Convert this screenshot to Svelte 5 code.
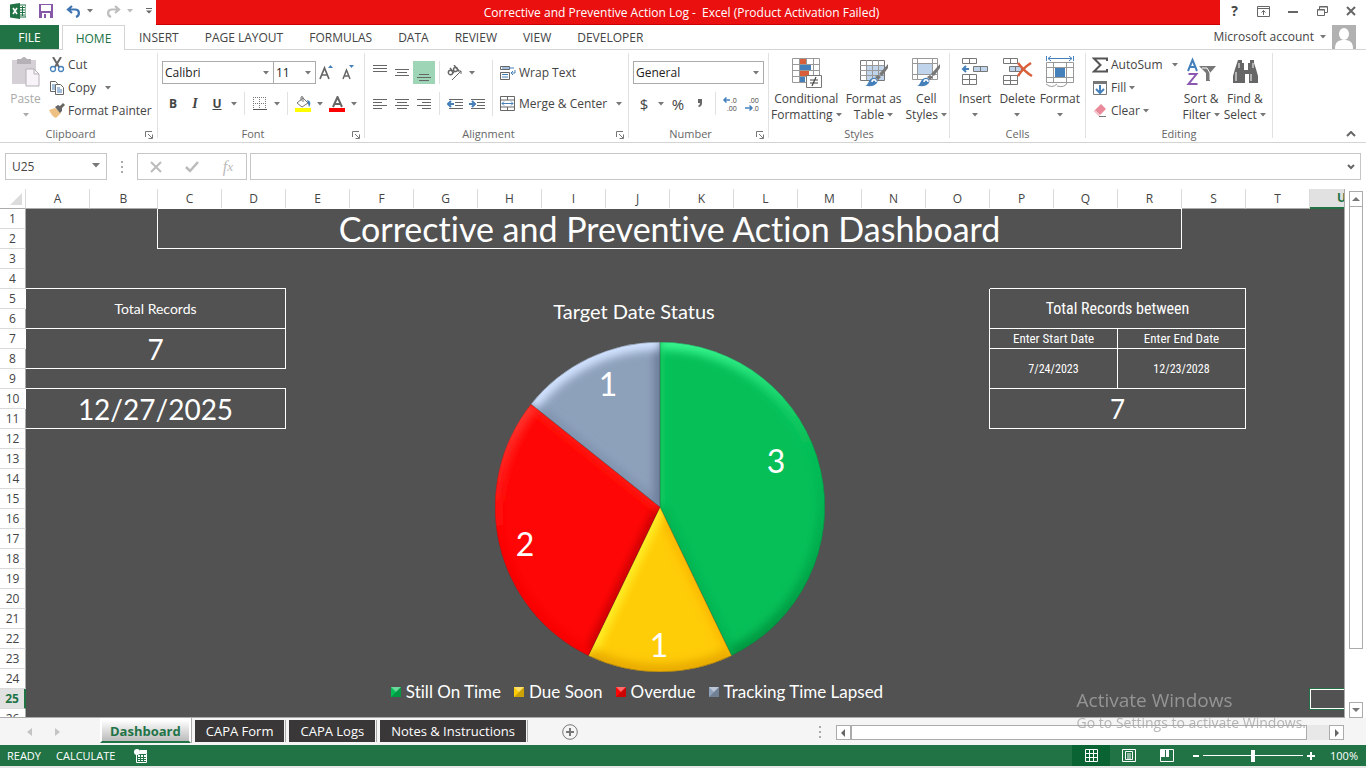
<script lang="ts">
	type Cell = { row: number; col: number; rows: number; cols: number; text: string; kind: string };

	const menu = ["INSERT", "PAGE LAYOUT", "FORMULAS", "DATA", "REVIEW", "VIEW", "DEVELOPER"];
	const columns = "ABCDEFGHIJKLMNOPQRSTU".split("");
	const rows = Array.from({ length: 26 }, (_, i) => i + 1);
	const sheets = ["CAPA Form", "CAPA Logs", "Notes & Instructions"];

	const cells: Cell[] = [
		{ row: 1, col: 2, rows: 2, cols: 16, text: "Corrective and Preventive Action Dashboard", kind: "title" },
		{ row: 5, col: 0, rows: 2, cols: 4, text: "Total Records", kind: "label" },
		{ row: 7, col: 0, rows: 2, cols: 4, text: "7", kind: "big" },
		{ row: 10, col: 0, rows: 2, cols: 4, text: "12/27/2025", kind: "big" },
		{ row: 5, col: 15, rows: 2, cols: 4, text: "Total Records between", kind: "narrow heading" },
		{ row: 7, col: 15, rows: 1, cols: 2, text: "Enter Start Date", kind: "narrow" },
		{ row: 7, col: 17, rows: 1, cols: 2, text: "Enter End Date", kind: "narrow" },
		{ row: 8, col: 15, rows: 2, cols: 2, text: "7/24/2023", kind: "narrow date" },
		{ row: 8, col: 17, rows: 2, cols: 2, text: "12/23/2028", kind: "narrow date" },
		{ row: 10, col: 15, rows: 2, cols: 4, text: "7", kind: "big total" }
	];

	function cellAt(row: number, col: number) {
		return cells.find((c) => row >= c.row && row < c.row + c.rows && col >= c.col && col < c.col + c.cols);
	}

	// Pie geometry
	const R = 165;
	const data = [
		{ name: "Still On Time", value: 3, color: "#06bf57", start: "#0bca5f", end: "#05b553", arc: "url(#greenArc)", lx: 116, ly: -34 },
		{ name: "Due Soon", value: 1, color: "#ffcc08", start: "#fbb800", end: "#fff028", arc: "#e9ab00", lx: -1, ly: 150 },
		{ name: "Overdue", value: 2, color: "#ff0606", start: "#c80000", end: "#ff1610", arc: "url(#redArc)", lx: -135, ly: 49 },
		{ name: "Tracking Time Lapsed", value: 1, color: "#8ea1bb", start: "#7f92af", end: "#6b7c99", arc: "#d0e2ff", lx: -52, ly: -111 }
	];
	const total = data.reduce((sum, d) => sum + d.value, 0);

	let turned = 0;
	const slices = data.map((d) => {
		const a = (turned / total) * Math.PI * 2;
		turned += d.value;
		const b = (turned / total) * Math.PI * 2;
		const p = `${R * Math.sin(a)} ${-R * Math.cos(a)}`;
		const q = `${R * Math.sin(b)} ${-R * Math.cos(b)}`;
		return {
			...d,
			shape: `M0 0L${p}A${R} ${R} 0 0 1 ${q}Z`,
			startLine: `M0 0L${p}`,
			endLine: `M0 0L${q}`,
			rim: `M${p}A${R} ${R} 0 0 1 ${q}`
		};
	});

	let zoom = $state(50);
</script>

{#snippet caret()}
	<svg class="caret" width="6" height="4" viewBox="0 0 6 4"><path d="M0 0h6L3 3.5z" fill="currentColor" /></svg>
{/snippet}

{#snippet launcher()}
	<button class="launcher" aria-label="More options">
		<svg width="8" height="8" viewBox="0 0 8 8" fill="none" stroke="#777"><path d="M.5 6V.5H7M3 3l4 4M7.500 3.500v4h-4" /></svg>
	</button>
{/snippet}

{#snippet lines(widths: number[], top: number, right = false, center = false)}
	<svg width="16" height="16" viewBox="0 0 16 16" fill="#666">
		{#each widths as w, i}
			<rect x={right ? 15 - w : center ? 8 - w / 2 : 1} y={top + i * 3} width={w} height="1" />
		{/each}
	</svg>
{/snippet}

{#snippet brush()}
	<path d="M30 8l-9 10 3 2 6-8z" fill="#777" />
	<path d="M20 19l-3 2 3 3 3-3z" fill="#777" />
	<path d="M7 30c4-1 3-7 8-8 4-1 6 4 3 6-3 3-7 2-11 2z" fill="#4580bb" />
	<path d="M14 26c0-3 4-3 4 0" fill="none" stroke="#fff" stroke-width="1.500" />
{/snippet}

<div class="excel">
	<header class="titlebar">
		<div class="quick">
			<svg width="16" height="16" viewBox="0 0 16 16">
				<path d="M9 2h7v12H9z" fill="#fff" stroke="#217346" />
				<path d="M10 4.500h5M10 7h5M10 9.500h5M10 12h5M12.500 3v10" stroke="#217346" />
				<path d="M0 1.500L10 0v16L0 14.500z" fill="#217346" />
				<path d="M3 5l4 6M7 5l-4 6" stroke="#fff" stroke-width="1.600" />
			</svg>
			<button aria-label="Save">
				<svg width="14" height="14" viewBox="0 0 14 14"><path d="M0 0h14v14H0z" fill="#8559a8" /><path d="M2 1h10v6H2zM3 9h8v5H3z" fill="#fff" /><path d="M5 10h2v4H5z" fill="#8559a8" /></svg>
			</button>
			<button aria-label="Undo">
				<svg width="15" height="13" viewBox="0 0 15 13" fill="none" stroke="#3f74b0" stroke-width="2.200"><path d="M6 1L2 4.500 6 8M2 4.500h7c5 0 5 6 1 7.500" /></svg>
				{@render caret()}
			</button>
			<button class="redo" aria-label="Redo">
				<svg width="15" height="13" viewBox="0 0 15 13" fill="none" stroke="#bdbdbd" stroke-width="2.200"><path d="M9 1l4 3.500L9 8M13 4.500H6c-5 0-5 6-1 7.500" /></svg>
				{@render caret()}
			</button>
			<button aria-label="Customize toolbar">
				<svg width="6" height="6" viewBox="0 0 6 6" fill="#666"><path d="M0 0h6v1H0zM0 2.500h6L3 5.500z" /></svg>
			</button>
		</div>
		<h1>Corrective and Preventive Action Log -&nbsp; Excel (Product Activation Failed)</h1>
		<div class="window">
			<button class="help" aria-label="Help">?</button>
			<button aria-label="Ribbon display options">
				<svg width="13" height="11" viewBox="0 0 13 11" fill="none" stroke="#666"><path d="M.5.5h12v10H.5zM0 2.500h13M6.500 9V4.500M4.500 6.500l2-2 2 2" /></svg>
			</button>
			<button aria-label="Minimize"><svg width="10" height="10" viewBox="0 0 10 10"><path d="M0 5h10v2H0z" fill="#666" /></svg></button>
			<button aria-label="Restore">
				<svg width="11" height="10" viewBox="0 0 11 10" fill="none" stroke="#666"><path d="M.5 3.500h7v6h-7zM.5 4h7M2.500 3V.5h8v6H8M2.500 1h8" /></svg>
			</button>
			<button aria-label="Close"><svg width="10" height="10" viewBox="0 0 10 10"><path d="M1 1l8 8M9 1L1 9" stroke="#666" stroke-width="2" /></svg></button>
		</div>
	</header>

	<nav class="menu">
		<button class="file">FILE</button>
		<button class="home">HOME</button>
		{#each menu as item}
			<button>{item}</button>
		{/each}
		<button class="account">Microsoft account {@render caret()}</button>
		<svg width="24" height="24" viewBox="0 0 24 24"><path d="M0 0h24v24H0z" fill="#b1b1b1" /><ellipse cx="12" cy="9" rx="5" ry="6" fill="#fff" /><path d="M3 24c0-7 3-9 9-9s9 2 9 9z" fill="#fff" /></svg>
	</nav>

	<div class="ribbon">
		<section class="group clipboard">
			<div class="body">
				<button class="large muted">
					<svg width="30" height="32" viewBox="0 0 30 32">
						<path d="M1 4h24v24H1z" fill="#d4d0d6" /><path d="M6 3h4q3-4 6 0h4v5H6z" fill="#b5b1b7" />
						<path d="M15 13h8l5 5v12H15z" fill="#f7f3f9" stroke="#b5b1b7" /><path d="M23 13v5h5" fill="none" stroke="#b5b1b7" />
					</svg>
					<span>Paste</span>
					{@render caret()}
				</button>
				<div class="stack">
					<button>
						<svg width="16" height="16" viewBox="0 0 16 16" fill="none"><path d="M4 0l6 10M12 0L6 10" stroke="#666" stroke-width="2" /><circle cx="4" cy="12" r="2.500" stroke="#4580bb" stroke-width="1.300" /><circle cx="12" cy="12" r="2.500" stroke="#4580bb" stroke-width="1.300" /></svg>
						Cut
					</button>
					<button>
						<svg width="16" height="16" viewBox="0 0 16 16" fill="#fff" stroke="#666"><path d="M1.500 1.500h5l2 2v8h-7z" /><path d="M6.500 4.500h5l3 3v7h-8z" /><path d="M3 5h3M3 7h3M3 9h3M8 8h3M8 10h5M8 12h5" stroke="#4580bb" /></svg>
						Copy <i></i>{@render caret()}
					</button>
					<button>
						<svg width="16" height="16" viewBox="0 0 16 16"><path d="M0 7l6-2 6 5-5 5c-3-1-5-4-7-8z" fill="#eec183" /><path d="M6 4l3-2 2 1 3-3 2 2-3 3v3l-2 2z" fill="#666" /></svg>
						Format Painter
					</button>
				</div>
			</div>
			<footer>Clipboard{@render launcher()}</footer>
		</section>

		<section class="group font">
			<div class="body rows">
				<div class="row">
					<label class="select family"><select aria-label="Font"><option>Calibri</option></select>{@render caret()}</label>
					<label class="select size"><select aria-label="Font size"><option>11</option></select>{@render caret()}</label>
					<button class="tool" aria-label="Increase font size"><svg width="16" height="16" viewBox="0 0 16 16"><path d="M1 14L5.500 3 10 14M3 10h5" fill="none" stroke="#666" stroke-width="1.700" /><path d="M9 3l2.500-3L14 3z" fill="#4580bb" /></svg></button>
					<button class="tool" aria-label="Decrease font size"><svg width="16" height="16" viewBox="0 0 16 16"><path d="M2 14L5.500 5 9 14M3 11h5" fill="none" stroke="#666" stroke-width="1.500" /><path d="M8 0l2.500 3L13 0z" fill="#4580bb" /></svg></button>
				</div>
				<div class="row">
					<button class="tool"><b>B</b></button>
					<button class="tool"><b class="italic">I</b></button>
					<button class="tool"><b class="under">U</b></button>
					<button class="drop" aria-label="Underline style">{@render caret()}</button>
					<span class="bar"></span>
					<button class="tool" aria-label="Borders"><svg width="14" height="14" viewBox="0 0 14 14" fill="none" stroke="#777" stroke-dasharray="1 1"><path d="M.5 0v13M6.500 0v13M12.500 0v13M0 .5h13M0 6.500h13" /><path d="M0 12.500h14" stroke-dasharray="none" stroke="#555" /></svg></button>
					<button class="drop" aria-label="Border style">{@render caret()}</button>
					<span class="bar"></span>
					<button class="tool" aria-label="Fill colour"><svg width="16" height="16" viewBox="0 0 16 16"><path d="M2 7l6-5 5 5-6 4z" fill="#fff" stroke="#777" /><path d="M6 5V1q1-1 2 0v5" fill="none" stroke="#777" /><path d="M12 4c4 1 4 4 2 7z" fill="#4580bb" /><path d="M0 12h16v4H0z" fill="#ff0" /></svg></button>
					<button class="drop" aria-label="Fill palette">{@render caret()}</button>
					<button class="tool" aria-label="Font colour"><svg width="16" height="16" viewBox="0 0 16 16"><path d="M4 11L8.500 1 13 11M5.500 8h6" fill="none" stroke="#666" stroke-width="2" /><path d="M0 12h16v4H0z" fill="red" /></svg></button>
					<button class="drop" aria-label="Font palette">{@render caret()}</button>
				</div>
			</div>
			<footer>Font{@render launcher()}</footer>
		</section>

		<section class="group alignment">
			<div class="body">
				<div class="rows">
					<div class="row">
						<button class="tool" aria-label="Top align">{@render lines([14, 14, 14], 0)}</button>
						<button class="tool" aria-label="Middle align">{@render lines([14, 10, 14], 4, false, true)}</button>
						<button class="tool pressed" aria-label="Bottom align">{@render lines([10, 14, 10], 9, false, true)}</button>
						<span class="bar"></span>
						<button class="tool" aria-label="Orientation"><svg width="16" height="16" viewBox="0 0 16 16" fill="none" stroke="#666" stroke-width="1.400"><circle cx="3.500" cy="7.500" r="2.200" /><path d="M3 3l4 5M7 0l5 6" /><circle cx="8.500" cy="4.500" r="2" /><path d="M5 15L14 6M11 6h3v3" stroke-width="1" /></svg></button>
						<button class="drop" aria-label="Orientation options">{@render caret()}</button>
					</div>
					<div class="row">
						<button class="tool" aria-label="Align left">{@render lines([14, 9, 14, 9], 3)}</button>
						<button class="tool" aria-label="Center">{@render lines([14, 10, 14, 10], 3, false, true)}</button>
						<button class="tool" aria-label="Align right">{@render lines([14, 9, 14, 9], 3, true)}</button>
						<span class="bar"></span>
						{#each ["Decrease indent", "Increase indent"] as name, i}
							<button class="tool" aria-label={name}>
								<svg width="16" height="14" viewBox="0 0 16 14"><path d="M2 2h14v1H2zM8 5h8v1H8zM8 8h8v1H8zM2 11h14v1H2z" fill="#666" /><path d={i ? "M0 7h6M3 4l3 3-3 3" : "M7 7H1M4 4L1 7l3 3"} fill="none" stroke="#4580bb" stroke-width="2" /></svg>
							</button>
						{/each}
					</div>
				</div>
				<span class="bar tall"></span>
				<div class="rows">
					<button class="wide">
						<svg width="16" height="16" viewBox="0 0 16 16" fill="none" stroke="#666"><path d="M.5 1.500h9v3h-9zM.5 7.500h9v7h-9z" /><path d="M2 3h12M2 9.500h6M2 12h6M15 5v3h-4M13 6l-2 2 2 2" stroke="#4580bb" /></svg>
						Wrap Text
					</button>
					<button class="wide">
						<svg width="16" height="16" viewBox="0 0 16 16" fill="none" stroke="#666"><path d="M.5.5h14v14H.5zM.5 4h14M.5 11h14M7.500.5V4M7.500 11v4" /><path d="M2 7.500h11M4 5.500l-2 2 2 2M11 5.500l2 2-2 2" stroke="#4580bb" /></svg>
						Merge &amp; Center {@render caret()}
					</button>
				</div>
			</div>
			<footer>Alignment{@render launcher()}</footer>
		</section>

		<section class="group number">
			<div class="body rows">
				<div class="row"><label class="select format"><select aria-label="Number format"><option>General</option></select>{@render caret()}</label></div>
				<div class="row">
					<button class="tool sign">$</button>
					<button class="drop" aria-label="Currency">{@render caret()}</button>
					<button class="tool sign">%</button>
					<button class="tool" aria-label="Comma style"><svg width="6" height="9" viewBox="0 0 6 9"><path d="M1 0h4v4q0 3-3 4l-1-1q2-1 2-3H1z" fill="#666" /></svg></button>
					<span class="bar"></span>
					<button class="tool decimals" aria-label="Increase decimal"><svg width="18" height="18" viewBox="0 0 18 18"><path d="M8 5H2M4.500 2.500L2 5l2.500 2.500" fill="none" stroke="#4580bb" stroke-width="1.500" /><text x="9" y="8">.0</text><text x="5" y="16">.00</text></svg></button>
					<button class="tool decimals" aria-label="Decrease decimal"><svg width="18" height="18" viewBox="0 0 18 18"><path d="M1 13h7M5.500 10.500L8 13l-2.500 2.500" fill="none" stroke="#4580bb" stroke-width="1.500" /><text x="5" y="8">.00</text><text x="9" y="16">.0</text></svg></button>
				</div>
			</div>
			<footer>Number{@render launcher()}</footer>
		</section>

		<section class="group styles">
			<div class="body">
				<button class="large">
					<svg width="32" height="32" viewBox="0 0 32 32">
						<path d="M2.500 2.500h27v24h-27zM2 8.500h27M2 14.500h27M2 20.500h27M9.500 2v24M16.500 2v24M23.500 2v24" fill="#fff" stroke="#999" />
						<path d="M10 3h6v5h-6zM10 15h9v5h-9z" fill="#d95f3b" /><path d="M10 9h11v5H10zM10 21h5v5h-5z" fill="#4580bb" />
						<path d="M16.500 19.500h15v12h-15z" fill="#fff" stroke="#777" /><path d="M20 24h8M20 27h8M26 21l-4 9" stroke="#444" stroke-width="1.200" />
					</svg>
					<span>Conditional</span><span>Formatting {@render caret()}</span>
				</button>
				<button class="large">
					<svg width="32" height="32" viewBox="0 0 32 32"><path d="M2.500 4.500h24v20h-24z" fill="#fff" stroke="#777" /><path d="M9 10h17v14H9z" fill="#c0d5eb" /><path d="M2 9.500h24M2 14.500h24M2 19.500h24M8.500 4v20M14.500 4v20M20.500 4v20" stroke="#999" />{@render brush()}</svg>
					<span>Format as</span><span>Table {@render caret()}</span>
				</button>
				<button class="large">
					<svg width="32" height="32" viewBox="0 0 32 32"><path d="M2.500 2.500h25v21h-25zM2 7.500h25M2 18.500h25M7.500 2v21M22.500 2v21" fill="#fff" stroke="#999" /><path d="M8 8h14v10H8z" fill="#c0d5eb" />{@render brush()}</svg>
					<span>Cell</span><span>Styles {@render caret()}</span>
				</button>
			</div>
			<footer>Styles</footer>
		</section>

		<section class="group cells">
			<div class="body">
				<button class="large">
					<svg width="32" height="32" viewBox="0 0 32 32" fill="#fff" stroke="#777"><path d="M3.500 2.500h14v5h-14zM10.500 2v5M3.500 18.500h14v10h-14zM3 23.500h14M10.500 18v10" /><path d="M14.500 10.500h14v5h-14zM21.500 10v5" fill="#c0d5eb" /><path d="M10 13H5M7 10l-3 3 3 3" fill="none" stroke="#4580bb" stroke-width="2" /></svg>
					<span>Insert</span>{@render caret()}
				</button>
				<button class="large">
					<svg width="32" height="32" viewBox="0 0 32 32" fill="#fff" stroke="#777"><path d="M2.500 2.500h14v5h-14zM9.500 2v5M2.500 19.500h14v9h-14zM2 24.500h14M9.500 19v9" /><path d="M8.500 10.500h12v5h-12zM14.500 10v5" fill="#c0d5eb" /><path d="M17 7q7 9 14 13M30 7q-8 5-13 13" fill="none" stroke="#d95f3b" stroke-width="2.500" /></svg>
					<span>Delete</span>{@render caret()}
				</button>
				<button class="large">
					<svg width="32" height="32" viewBox="0 0 32 32" fill="none" stroke="#999"><path d="M2.500 6.500h27v20h-27zM2 11.500h27M2 21.500h27M9.500 6v20M22.500 6v20M2 28q6 5 11 0M13 30q8 2 10-3" /><path d="M11 12h10v9H11z" fill="#4580bb" stroke="none" /><path d="M2.500 0v5M29.500 0v5M4 2.500h24M7 0L4 2.500 7 5M25 0l3 2.500L25 5" stroke="#4580bb" /></svg>
					<span>Format</span>{@render caret()}
				</button>
			</div>
			<footer>Cells</footer>
		</section>

		<section class="group editing">
			<div class="body">
				<div class="stack">
					<button>
						<svg width="16" height="16" viewBox="0 0 16 16"><path d="M15 4V1.500H2L8.500 8 2 14.500h13V12" fill="none" stroke="#555" stroke-width="2" /></svg>
						AutoSum <i></i>{@render caret()}
					</button>
					<button>
						<svg width="16" height="16" viewBox="0 0 16 16"><path d="M1.500 1.500h13v13h-13z" fill="#fff" stroke="#777" /><path d="M1 1h14v3H1z" fill="#777" /><path d="M8 5v8M4 9l4 4 4-4" fill="none" stroke="#4580bb" stroke-width="2" /></svg>
						Fill {@render caret()}
					</button>
					<button>
						<svg width="16" height="16" viewBox="0 0 16 16"><path d="M9 1l5 5-7 7-5-5z" fill="#e9899a" /><path d="M3 7.500l5 5" stroke="#fff" /><path d="M7 13.500h7" stroke="#777" /></svg>
						Clear {@render caret()}
					</button>
				</div>
				<button class="large">
					<svg width="32" height="32" viewBox="0 0 32 32" fill="none"><path d="M3 15L7.500 4 12 15M4.500 11h6" stroke="#4580bb" stroke-width="2" /><path d="M3.500 18h8l-8 10h9" stroke="#8a58b0" stroke-width="2" /><path d="M14 10h17l-6 7v8h-4v-8z" fill="#777" /><path d="M17 12h5l3 5v7" stroke="#fff" /></svg>
					<span>Sort &amp;</span><span>Filter {@render caret()}</span>
				</button>
				<button class="large">
					<svg width="32" height="32" viewBox="0 0 32 32" fill="#666"><path d="M9 4h4v3h2v7h4V7h2V4h4v3l2 6 2 7v7h-9v-9h-4v9H4v-7l2-7 2-6z" /><path d="M7 16v9M10 7v5M24 7v5M22 18v7" stroke="#fff" /></svg>
					<span>Find &amp;</span><span>Select {@render caret()}</span>
				</button>
			</div>
			<footer>Editing</footer>
		</section>

		<button class="collapse" aria-label="Collapse the ribbon"><svg width="10" height="6" viewBox="0 0 10 6"><path d="M1 5l4-4 4 4" fill="none" stroke="#666" stroke-width="2" /></svg></button>
	</div>

	<div class="formula">
		<div class="namebox"><input aria-label="Name box" value="U25" /><button aria-label="Names"><svg width="8" height="5" viewBox="0 0 8 5"><path d="M0 0h8L4 4.500z" fill="#777" /></svg></button></div>
		<span class="dots"></span>
		<div class="entry">
			<button aria-label="Cancel"><svg width="12" height="12" viewBox="0 0 12 12"><path d="M1 1l10 10M11 1L1 11" stroke="#bbb" stroke-width="2" /></svg></button>
			<button aria-label="Enter"><svg width="14" height="12" viewBox="0 0 14 12"><path d="M1 6l4 4 8-9" fill="none" stroke="#bbb" stroke-width="2.500" /></svg></button>
			<button class="fx">f<small>x</small></button>
		</div>
		<div class="input"><input aria-label="Formula bar" /><button aria-label="Expand formula bar"><svg width="8" height="6" viewBox="0 0 8 6"><path d="M1 1l3 3 3-3" fill="none" stroke="#666" stroke-width="2" /></svg></button></div>
	</div>

	<main>
		<div class="sheet">
			<table>
				<colgroup>
					<col class="numbers" />
					{#each columns as c}<col class:b={c === "B"} />{/each}
				</colgroup>
				<thead>
					<tr>
						<th class="corner"><svg width="12" height="12" viewBox="0 0 12 12"><path d="M12 0v12H0z" fill="#dcdcdc" /></svg></th>
						{#each columns as c}<th class:current={c === "U"}>{c}</th>{/each}
					</tr>
				</thead>
				<tbody>
					{#each rows as r}
						<tr>
							<th class:current={r === 25}>{r}</th>
							{#each columns as _, c}
								{@const cell = cellAt(r, c)}
								{#if !cell}
									<td class:active={r === 25 && c === 20}></td>
								{:else if cell.row === r && cell.col === c}
									<td class="box {cell.kind}" colspan={cell.cols} rowspan={cell.rows}>{cell.text}</td>
								{/if}
							{/each}
						</tr>
					{/each}
				</tbody>
			</table>

			<figure class="chart">
				<figcaption>Target Date Status</figcaption>
				<svg width="340" height="340" viewBox="-170 -170 340 340">
					<defs>
						<filter id="bevel" filterUnits="userSpaceOnUse" x="-200" y="-200" width="400" height="400"><feGaussianBlur stdDeviation="4" /></filter>
						<linearGradient id="greenArc" gradientUnits="userSpaceOnUse" x1="20" y1="-164" x2="100" y2="150">
							<stop offset="0" stop-color="#38f58e" /><stop offset=".4" stop-color="#06bf57" /><stop offset=".65" stop-color="#04b050" /><stop offset="1" stop-color="#00953f" />
						</linearGradient>
						<linearGradient id="redArc" gradientUnits="userSpaceOnUse" x1="-140" y1="-100" x2="-110" y2="60">
							<stop offset="0" stop-color="#ff3830" /><stop offset=".7" stop-color="#ff0606" /><stop offset="1" stop-color="#f80000" />
						</linearGradient>
						{#each slices as s, i}<clipPath id="slice{i}"><path d={s.shape} /></clipPath>{/each}
					</defs>
					{#each slices as s, i}
						<g clip-path="url(#slice{i})" fill="none">
							<path d={s.shape} fill={s.color} />
							<path d={s.startLine} stroke={s.start} stroke-width="10" filter="url(#bevel)" />
							<path d={s.endLine} stroke={s.end} stroke-width="12" filter="url(#bevel)" />
							<path d={s.rim} stroke={s.arc} stroke-width="16" filter="url(#bevel)" />
							<path d={s.shape} stroke="#333" stroke-opacity=".4" />
						</g>
					{/each}
					{#each slices as s}<text x={s.lx} y={s.ly}>{s.value}</text>{/each}
				</svg>
				<ul>
					{#each data as d}
						<li><svg width="10" height="10" viewBox="0 0 10 10"><path d="M0 0h10v10H0z" fill={d.color} /><path d="M0 0h10L5 5z" fill="#fff" opacity=".4" /><path d="M10 0v10H0l5-5z" opacity=".2" /></svg>{d.name}</li>
					{/each}
				</ul>
			</figure>
		</div>

		<div class="vscroll">
			<button aria-label="Scroll up"><svg width="8" height="4" viewBox="0 0 8 4"><path d="M0 4h8L4 0z" fill="#777" /></svg></button>
			<span class="thumb"></span>
			<button aria-label="Scroll down"><svg width="8" height="4" viewBox="0 0 8 4"><path d="M0 0h8L4 4z" fill="#777" /></svg></button>
		</div>
	</main>

	<div class="sheets">
		<button class="step" aria-label="Previous sheet"><svg width="5" height="8" viewBox="0 0 5 8"><path d="M5 0v8L0 4z" fill="#c4c4c4" /></svg></button>
		<button class="step" aria-label="Next sheet"><svg width="5" height="8" viewBox="0 0 5 8"><path d="M0 0v8l5-4z" fill="#c4c4c4" /></svg></button>
		<button class="tab selected">Dashboard</button>
		{#each sheets as name}
			<button class="tab">{name}</button>
		{/each}
		<button class="add" aria-label="New sheet"><svg width="16" height="16" viewBox="0 0 16 16" fill="none" stroke="#777"><circle cx="8" cy="8" r="7.300" /><path d="M8 4v8M4 8h8" stroke-width="2" /></svg></button>
		<span class="dots"></span>
		<div class="hscroll">
			<button aria-label="Scroll left"><svg width="4" height="8" viewBox="0 0 4 8"><path d="M4 0v8L0 4z" fill="#666" /></svg></button>
			<span class="thumb"></span>
			<button aria-label="Scroll right"><svg width="4" height="8" viewBox="0 0 4 8"><path d="M0 0v8l4-4z" fill="#666" /></svg></button>
		</div>
	</div>

	<footer class="status">
		<span>READY</span>
		<span>CALCULATE</span>
		<button class="macro" aria-label="Record macro"><svg width="13" height="14" viewBox="0 0 13 14" fill="#fff"><path d="M2.500 4.500h10v9h-10z" fill="none" stroke="#fff" /><path d="M6 1h7v3H6zM4 6h2v2H4zM7 6h2v2H7zM10 6h2v2h-2zM4 9h2v1H4zM7 9h2v1H7zM10 9h2v1h-2zM4 11h2v1H4zM7 11h2v1H7zM10 11h2v1h-2z" /><circle cx="3" cy="3" r="3" /></svg></button>
		<button class="view on" aria-label="Normal"><svg width="13" height="13" viewBox="0 0 13 13" fill="none" stroke="#fff"><path d="M.5.5h12v12H.5zM4.500 0v13M8.500 0v13M0 4.500h13M0 8.500h13" /></svg></button>
		<button class="view" aria-label="Page layout"><svg width="14" height="13" viewBox="0 0 14 13" fill="none" stroke="#fff"><path d="M.5.5h13v12H.5zM3.500 2.500h7v8h-7zM5 5h4M5 7h4M5 9h4" /></svg></button>
		<button class="view" aria-label="Page break preview"><svg width="14" height="13" viewBox="0 0 14 13"><path d="M.5.5h13v12H.5z" fill="none" stroke="#fff" /><path d="M1 1h4v7H1zM6 1h3v7H6z" fill="#fff" /></svg></button>
		<div class="zoom">
			<button aria-label="Zoom out"><svg width="6" height="2" viewBox="0 0 6 2"><path d="M0 0h6v2H0z" fill="#fff" /></svg></button>
			<input type="range" aria-label="Zoom" bind:value={zoom} />
			<button aria-label="Zoom in"><svg width="8" height="8" viewBox="0 0 8 8"><path d="M0 3h8v2H0zM3 0h2v8H3z" fill="#fff" /></svg></button>
		</div>
		<span>{zoom * 2}%</span>
	</footer>

	<div class="watermark">
		<p>Activate Windows</p>
		<span>Go to Settings to activate Windows.</span>
	</div>
</div>

<style>
	:global(body) {
		margin: 0;
	}

	.excel {
		position: relative;
		display: flex;
		flex-direction: column;
		height: 100vh;
		overflow: hidden;
		background: #fff;
		color: #444;
		font-family: "Open Sans", "Noto Sans", sans-serif;
		font-size: 12px;
		line-height: 16px;
	}

	.excel * {
		box-sizing: border-box;
	}

	button {
		display: flex;
		align-items: center;
		justify-content: center;
		padding: 0;
		border: 0;
		background: none;
		color: inherit;
		font: inherit;
		white-space: nowrap;
	}

	svg {
		flex: none;
	}

	.caret {
		color: #777;
	}

	/* Title bar */
	.titlebar {
		display: flex;
		height: 25px;
	}

	.quick {
		display: flex;
		align-items: center;
		width: 156px;
		padding: 0 0 3px 10px;
		gap: 13px;
	}

	.quick button {
		gap: 6px;
	}

	.redo .caret {
		color: #bbb;
	}

	h1 {
		flex: 1;
		margin: 0;
		background: #ea1010;
		border-bottom: 1px solid #c00;
		color: #fff;
		font-size: 12px;
		font-weight: 400;
		line-height: 25px;
		text-align: center;
		padding-right: 13px;
	}

	.window {
		display: flex;
		width: 146px;
		padding-bottom: 3px;
	}

	.window button {
		flex: 1;
	}

	.help {
		font-size: 14px;
		font-weight: 700;
	}

	/* Menu */
	.menu {
		display: flex;
		align-items: stretch;
		height: 25px;
		border-bottom: 1px solid #d4d4d4;
	}

	.menu button {
		padding: 2px 13px 0;
	}

	.menu .file {
		width: 59px;
		margin-right: 3px;
		background: #217346;
		color: #fff;
	}

	.menu .home {
		height: 25px;
		width: 63px;
		margin-right: 1px;
		border: 1px solid #d4d4d4;
		border-bottom: 0;
		background: #fff;
		color: #217346;
	}

	.menu .account {
		margin-left: auto;
		padding: 0 6px;
		gap: 6px;
	}

	.menu > svg {
		margin-right: 10px;
	}

	/* Ribbon */
	.ribbon {
		display: flex;
		height: 93px;
		padding-top: 3px;
		border-bottom: 1px solid #d4d4d4;
	}

	.group {
		display: flex;
		flex-direction: column;
		flex: none;
		margin-bottom: 4px;
		border-right: 1px solid #e1e1e1;
	}

	.clipboard { width: 158px; }
	.font { width: 207px; }
	.alignment { width: 264px; }
	.number { width: 140px; }
	.styles { width: 181px; }
	.cells { width: 136px; }
	.editing { width: 187px; }

	.body {
		display: flex;
		flex: 1;
		padding: 0 4px;
	}

	.group footer {
		position: relative;
		height: 16px;
		margin-bottom: -4px;
		color: #666;
		line-height: 16px;
		text-align: center;
		padding-right: 16px;
		font-size: 11px;
	}

	.styles footer,
	.cells footer,
	.editing footer {
		padding-right: 0;
	}

	.launcher {
		position: absolute;
		right: 4px;
		top: 5px;
	}

	.large {
		flex-direction: column;
		justify-content: flex-start;
		padding-top: 3px;
	}

	.large span {
		height: 16px;
	}

	.large span:first-of-type {
		margin-top: 3px;
	}

	.large > .caret {
		margin-top: 6px;
	}

	.large span .caret {
		margin-bottom: 2px;
	}

	.clipboard .large {
		width: 43px;
	}

	.muted,
	.muted .caret {
		color: #aaa;
	}

	.stack button {
		height: 23px;
		padding-left: 2px;
		gap: 3px;
	}

	.stack i {
		width: 3px;
	}

	.rows {
		display: flex;
		flex-direction: column;
		justify-content: flex-start;
		padding-top: 8px;
		gap: 8px;
	}

	.row {
		display: flex;
		height: 23px;
	}

	.rows.body {
		padding-top: 8px;
	}

	.tool {
		width: 22px;
	}

	.drop {
		width: 12px;
	}

	.bar {
		width: 1px;
		margin: 0 4px;
		background: #e1e1e1;
	}

	.bar.tall {
		height: 56px;
		margin: 7px 7px 0 auto;
	}

	.wide {
		height: 23px;
		width: 124px;
		justify-content: flex-start;
		gap: 3px;
	}

	.wide .caret {
		margin-left: 6px;
	}

	.pressed {
		background: #9fd5b7;
	}

	.select {
		display: flex;
		flex: none;
		align-items: center;
		border: 1px solid #ababab;
	}

	.select + .select {
		border-left: 0;
	}

	.select select {
		width: 100%;
		padding: 0 2px;
		border: 0;
		appearance: none;
		background: none;
		color: #222;
		font: inherit;
	}

	.select .caret {
		margin-right: 4px;
	}

	.family { width: 112px; }
	.size { width: 42px; }
	.format { width: 131px; }

	.italic {
		font-family: "Liberation Serif", serif;
		font-size: 14px;
		font-style: italic;
	}

	.under {
		text-decoration: underline;
	}

	.sign {
		font-size: 15px;
	}

	.decimals text {
		fill: #444;
		font-size: 7px;
	}

	.styles .body {
		justify-content: center;
	}

	.styles .large,
	.editing .large {
		padding-right: 2px;
		padding-left: 2px;
	}

	.cells .large {
		flex: 1;
	}

	.editing .stack {
		width: 95px;
	}

	.collapse {
		margin: auto 10px 5px auto;
	}

	/* Formula bar */
	.formula {
		display: flex;
		height: 46px;
		padding: 10px 5px 9px;
	}

	.formula > div {
		display: flex;
		border: 1px solid #c6c6c6;
	}

	.formula input {
		flex: 1;
		min-width: 0;
		padding: 0 6px;
		border: 0;
		color: #444;
		font: inherit;
		outline: 0;
	}

	.namebox {
		width: 102px;
	}

	.namebox button {
		width: 20px;
		padding-bottom: 2px;
	}

	.dots {
		width: 2px;
		height: 12px;
		margin: 8px 14px;
		background: repeating-linear-gradient(#aaa 0 2px, transparent 2px 5px);
	}

	.entry {
		width: 110px;
		margin-right: 3px;
	}

	.entry button {
		flex: 1;
	}

	.fx {
		color: #bbb;
		font-family: "Liberation Serif", serif;
		font-size: 16px;
		font-style: italic;
	}

	.input {
		flex: 1;
	}

	.input button {
		width: 18px;
	}

	/* Sheet */
	main {
		display: flex;
		flex: 1;
		min-height: 0;
	}

	.sheet {
		position: relative;
		flex: 1;
		min-width: 0;
		overflow: hidden;
		background: #525252;
		border-bottom: 1px solid #ababab;
		font-family: Lato, sans-serif;
		font-variant-ligatures: none;
	}

	table {
		width: 1374px;
		table-layout: fixed;
		border-spacing: 0;
	}

	col { width: 64px; }
	col.b { width: 68px; }
	col.numbers { width: 26px; }

	th {
		height: 20px;
		padding: 0;
		border-right: 1px solid #dadada;
		border-bottom: 1px solid #ababab;
		background: #fff;
		font-family: "Open Sans", "Noto Sans", sans-serif;
		font-weight: 400;
		line-height: 18px;
	}

	tbody th {
		padding-top: 1px;
		border-right-color: #ababab;
		border-bottom-color: #dadada;
	}

	.corner svg {
		display: block;
		margin-left: 10px;
	}

	th.current {
		background: #e1e1e1;
		color: #217346;
		font-weight: 700;
	}

	thead .current {
		border-bottom: 2px solid #217346;
	}

	tbody .current {
		border-right: 2px solid #217346;
	}

	td {
		height: 20px;
		padding: 0;
		color: #fff;
		text-align: center;
	}

	.active {
		border: 1px solid #fff;
		outline: 1px solid #217346;
	}

	.box {
		border-right: 1px solid #fff;
		border-bottom: 1px solid #fff;
		box-shadow: -1px 0 #fff, 0 -1px #fff;
	}

	.title {
		font-size: 34px;
		line-height: 36px;
	}

	.label {
		font-size: 14px;
	}

	.big {
		font-size: 28px;
		line-height: 36px;
	}

	.narrow {
		font-family: "Roboto Condensed", "Liberation Sans Narrow", sans-serif;
		font-size: 13px;
		line-height: 18px;
	}

	.heading {
		font-size: 16px;
	}

	.date {
		font-size: 12px;
	}

	.total {
		font-size: 26px;
	}

	.chart {
		position: absolute;
		top: 110px;
		left: 382px;
		width: 510px;
		margin: 0;
		color: #fff;
	}

	figcaption {
		font-size: 20px;
		line-height: 24px;
		text-align: center;
		padding-right: 6px;
	}

	.chart > svg {
		display: block;
		margin: 14px 0 0 108px;
	}

	.chart text {
		fill: #fff;
		font-size: 32px;
		text-anchor: middle;
	}

	ul {
		display: flex;
		justify-content: center;
		margin: 5px 0 0;
		padding: 0;
		gap: 13px;
		font-size: 17px;
		line-height: 20px;
		list-style: none;
	}

	li {
		display: flex;
		align-items: center;
		gap: 5px;
		white-space: nowrap;
	}

	/* Scroll bars */
	.vscroll {
		display: flex;
		flex-direction: column;
		width: 22px;
		padding: 2px 3px 0 4px;
		border-left: 1px solid #ababab;
		background: #fff;
	}

	.vscroll button,
	.hscroll button,
	.thumb {
		border: 1px solid #ababab;
		background: #fff;
	}

	.vscroll button {
		height: 16px;
	}

	.vscroll .thumb {
		height: 84%;
		margin: -1px 0 auto;
	}

	.sheets {
		display: flex;
		height: 27px;
		background: #f5f5f5;
	}

	.step {
		width: 28px;
	}

	.step:first-child {
		margin-left: 15px;
	}

	.tab {
		height: 22px;
		margin: 2px 0 0 4px;
		padding: 0 11px;
		border-right: 1px solid #f5f5f5;
		background: #3a3738;
		color: #fff;
		font-size: 13px;
		box-shadow: 1px 0 #ababab;
	}

	.tab.selected {
		height: 25px;
		margin: 0 0 0 29px;
		padding: 0 8px;
		border: 2px solid #fff;
		border-bottom: 2px solid #217346;
		background: linear-gradient(#fff, #bbb);
		color: #217346;
		font-weight: 700;
	}

	.add {
		margin-left: 35px;
	}

	.sheets .dots {
		margin: 8px 15px 0 auto;
	}

	.hscroll {
		display: flex;
		width: calc(37% + 3px);
		height: 15px;
		margin: 7px 22px 0 0;
		background: #e8e8e8;
	}

	.hscroll button {
		width: 15px;
	}

	.hscroll .thumb {
		flex: 1;
		margin-right: 22px;
	}

	/* Status bar */
	.status {
		display: flex;
		align-items: center;
		height: 23px;
		padding: 0 8px 0 7px;
		border-bottom: 2px solid #e6e6e6;
		background: #217346;
		color: #fff;
		font-size: 11px;
		gap: 15px;
	}

	.macro {
		margin: 0 auto 0 4px;
	}

	.view {
		width: 38px;
		height: 21px;
		margin-right: -15px;
	}

	.on {
		background: #0a6332;
	}

	.zoom {
		display: flex;
		align-items: center;
		margin-left: 7px;
		gap: 4px;
	}

	.zoom input {
		width: 100px;
		height: 20px;
		margin: 0;
		appearance: none;
		background: linear-gradient(#fff, #fff) center / 100% 1px no-repeat;
	}

	.zoom input::-webkit-slider-thumb {
		width: 4px;
		height: 12px;
		appearance: none;
		background: #fff;
	}

	.watermark {
		position: absolute;
		right: 60px;
		bottom: 34px;
		color: #a5a5a5;
		opacity: .8;
		pointer-events: none;
	}

	.watermark p {
		margin: 0;
		font-size: 19px;
		line-height: 24px;
	}

	.watermark span {
		font-size: 14px;
		line-height: 22px;
	}
</style>
